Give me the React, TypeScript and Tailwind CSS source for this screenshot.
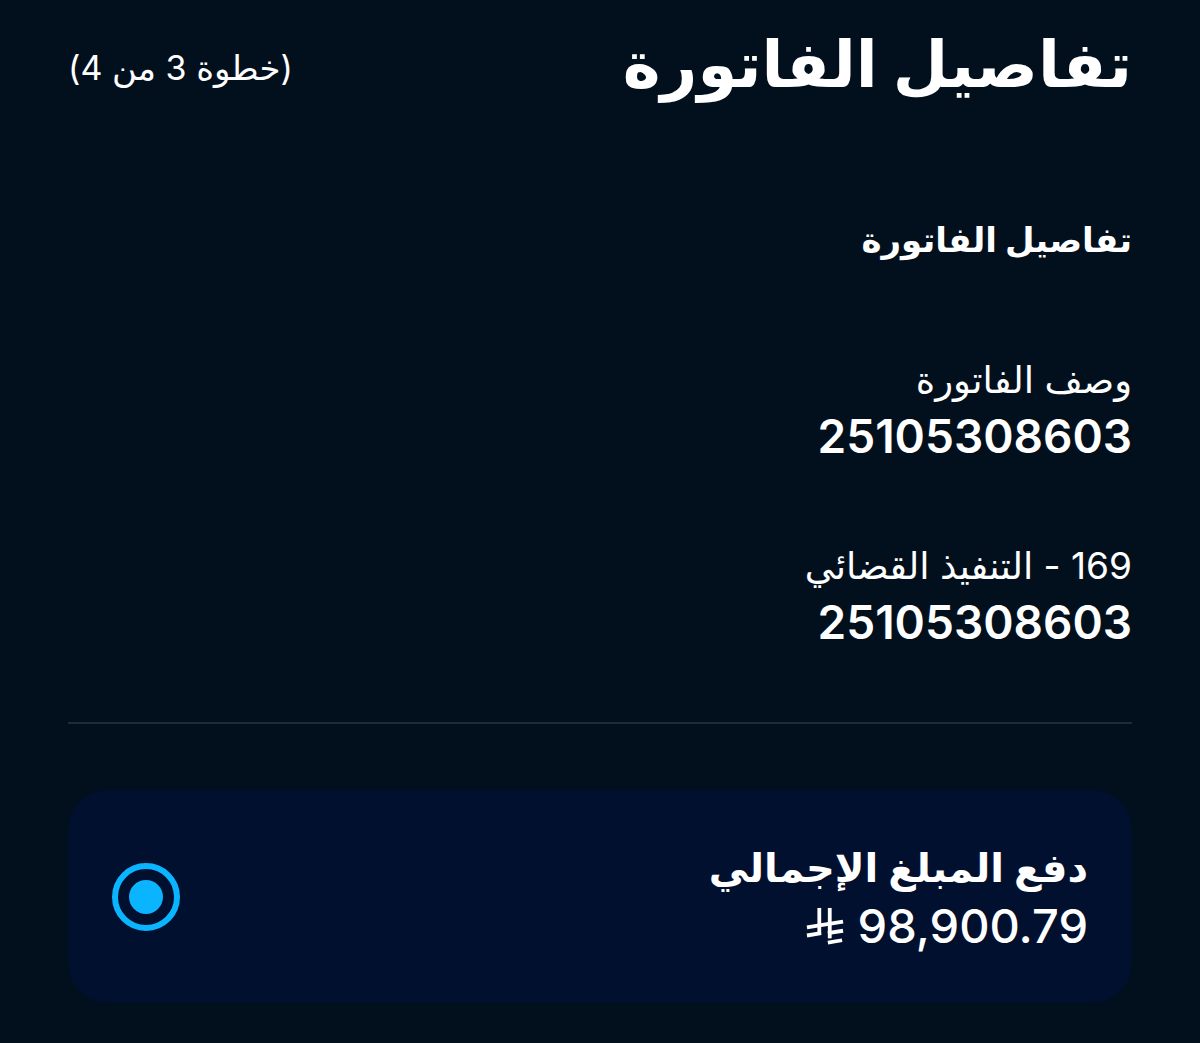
const font = "font-['Inter','Noto_Sans','DejaVu_Sans',sans-serif]";

function RiyalSign() {
  return (
    <svg viewBox="5 0 40 42" className="h-[40px] w-[38px]" fill="none" stroke="white" strokeWidth="4" strokeLinecap="butt">
      <path d="M19 2 V29" />
      <path d="M6 31 L21 28.6" />
      <path d="M30 2 V34" />
      <path d="M6 22.5 L44 16.5" />
      <path d="M28 28.6 L44 26" />
      <path d="M28 38.5 L43 36" />
    </svg>
  );
}

function Field({ label, value }: { label: string; value: string }) {
  return (
    <div className="flex flex-col">
      <div className="text-[37px] leading-[48px] text-white">{label}</div>
      <div className="mt-[6px] text-[46px] font-semibold leading-[52px] text-white">{value}</div>
    </div>
  );
}

export default function App() {
  return (
    <main dir="rtl" className={`min-h-[1043px] bg-[#02101e] px-[68px] ${font}`}>
      <header className="flex items-start justify-between pt-[18px]">
        <h1 className="text-[64px] font-bold leading-[92px] text-white">تفاصيل الفاتورة</h1>
        <span className="mt-[28px] text-[34px] leading-[44px] text-white">(خطوة 3 من 4)</span>
      </header>

      <h2 className="mt-[106px] text-[34px] font-bold leading-[48px] text-white">تفاصيل الفاتورة</h2>

      <div className="mt-[92px] flex flex-col gap-[80px]">
        <Field label="وصف الفاتورة" value="25105308603" />
        <Field label="169 - التنفيذ القضائي" value="25105308603" />
      </div>

      <div className="mt-[74px] h-[2px] bg-[#1f2b3b]" />

      <section className="mt-[66px] flex h-[213px] items-center justify-between rounded-[40px] bg-[#01102e] px-[44px]">
        <div className="flex flex-col">
          <div className="text-[40px] font-semibold leading-[54px] text-white">دفع المبلغ الإجمالي</div>
          <div className="mt-[4px] flex items-center gap-[14px] text-[47px] font-medium leading-[54px] text-white">
            <span dir="ltr">98,900.79</span>
            <RiyalSign />
          </div>
        </div>
        <div className="flex h-[68px] w-[68px] items-center justify-center rounded-full border-[6px] border-[#0bb4ff]">
          <div className="h-[34px] w-[34px] rounded-full bg-[#0bb4ff]" />
        </div>
      </section>
    </main>
  );
}
